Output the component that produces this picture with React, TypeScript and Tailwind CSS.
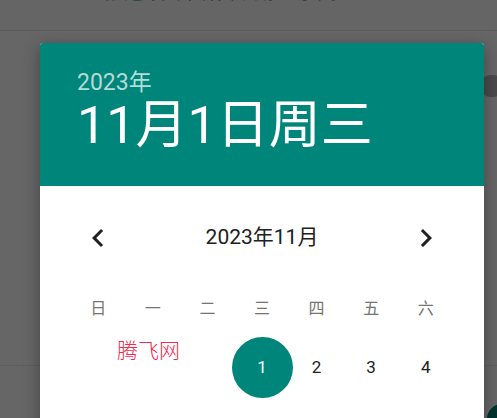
const font = { fontFamily: 'Roboto, "Noto Sans CJK SC", sans-serif' };

const weekdays = ["日", "一", "二", "三", "四", "五", "六"];

function ChevronLeft() {
  return (
    <svg viewBox="0 0 24 24" className="w-9 h-9" fill="#212121">
      <path d="M15.41 7.41L14 6l-6 6 6 6 1.41-1.41L10.83 12z" />
    </svg>
  );
}

function ChevronRight() {
  return (
    <svg viewBox="0 0 24 24" className="w-9 h-9" fill="#212121">
      <path d="M10 6L8.59 7.41 13.17 12l-4.58 4.59L10 18l6-6z" />
    </svg>
  );
}

export default function App() {
  const days: (number | null)[] = [null, null, null, 1, 2, 3, 4];
  return (
    <div className="relative w-[497px] h-[418px] overflow-hidden bg-[#666666]" style={font}>
      {/* dimmed page behind the dialog */}
      <div className="h-[31px] border-b border-[#5c5c5c] bg-[#656565] overflow-hidden">
        <div className="-mt-[23px] pl-[98px] text-[20px] leading-[30px] text-[#00332e] tracking-[6px]">请选择开始日期 时间</div>
      </div>
      <div className="h-[335px] border-b border-[#5e5e5e]" />
      <div className="absolute left-[480px] top-[75px] w-[24px] h-[22px] rounded-full bg-[#4a4a4a]" />
      <div className="absolute left-[487px] top-[404px] w-[30px] h-[30px] rounded-full bg-[#00332e]" />

      {/* dialog */}
      <div className="absolute left-[40px] top-[43px] w-[444px] h-[400px] rounded-t-[3px] bg-white shadow-[0_4px_16px_rgba(0,0,0,0.35)] overflow-hidden">
        <div className="h-[143px] bg-[#00857a] pl-[37px] pt-[26px]">
          <div className="text-[23px] leading-[28px] text-[#b3dbd7]">2023年</div>
          <div className="text-[52px] leading-[58px] text-white">11月1日周三</div>
        </div>

        <div className="relative">
          <div className="flex items-center justify-between px-10 pt-[34px] h-[70px]">
            <ChevronLeft />
            <div className="text-[21px] text-[#212121]">2023年11月</div>
            <ChevronRight />
          </div>

          <div className="grid grid-cols-7 px-[31px] mt-[38px] h-[30px] items-center text-center text-[16px] text-[#757575]">
            {weekdays.map((w) => (
              <div key={w}>{w}</div>
            ))}
          </div>

          <div className="grid grid-cols-7 px-[31px] mt-[13px] h-[61px] items-center text-[17px] text-[#212121]">
            {days.map((d, i) => (
              <div key={i} className="flex justify-center">
                {d === 1 ? (
                  <div className="w-[61px] h-[61px] shrink-0 rounded-full bg-[#00857a] text-white flex items-center justify-center">1</div>
                ) : (
                  <span>{d ?? ""}</span>
                )}
              </div>
            ))}
          </div>

          <div className="absolute left-[77px] top-[153px] text-[21px] leading-[24px] font-light text-[#f5284f]">腾飞网</div>
        </div>
      </div>
    </div>
  );
}
